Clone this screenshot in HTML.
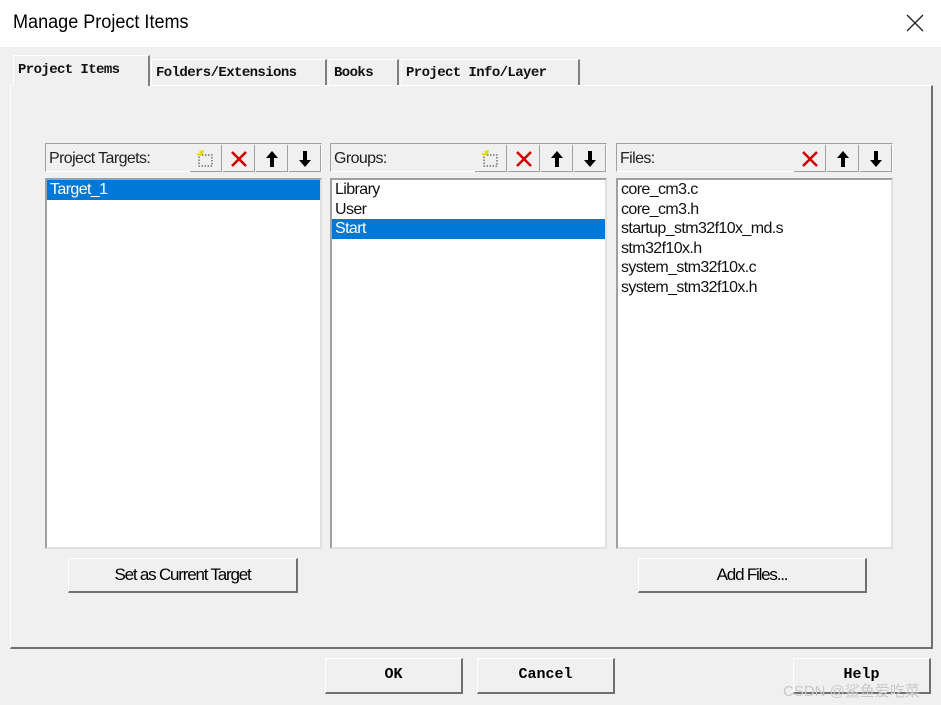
<!DOCTYPE html>
<html><head><meta charset="utf-8"><style>
body{margin:0;width:941px;height:705px;background:#f0f0f0;position:relative;overflow:hidden;font-family:"Liberation Sans",sans-serif;}
.a{position:absolute}
.title{left:0;top:0;width:941px;height:47px;background:#fff}
.title span{position:absolute;left:13px;top:12px;font-size:19px;color:#000;transform:scaleX(0.95);transform-origin:left}
.panel{left:10px;top:85px;width:920px;height:561px;border-top:1px solid #fff;border-left:1px solid #fff;border-right:2px solid #707070;border-bottom:2px solid #707070}
.tab{top:59px;height:26px;font-family:"Liberation Mono",monospace;font-weight:bold;font-size:14px;border-top:1px solid #fff;border-left:1px solid #fff;border-right:2px solid #808080;padding:0 4px;line-height:26px;box-sizing:border-box;white-space:nowrap;letter-spacing:-0.6px;color:#111}
.hdr{height:29px;border:1px solid #a0a0a0;border-right-color:#fff;border-bottom-color:#fff;box-sizing:border-box;font-size:16px;line-height:29px;padding-left:3px;color:#222;letter-spacing:-0.6px}
.ib{width:32px;height:27px;top:1px;border-right:1px solid #a0a0a0;border-bottom:1px solid #a0a0a0;box-sizing:border-box;background:#f0f0f0}
.ib svg{position:absolute;left:6px;top:4px}
.list{background:#fff;border:2px solid #a0a0a0;border-right-color:#e0e0e0;border-bottom-color:#e0e0e0;box-sizing:border-box;font-size:16px;letter-spacing:-0.6px;color:#111}
.list div{height:19.5px;line-height:19.5px;padding-left:3px}
.sel{background:#0078d7;color:#fff}
.btn{border-top:1px solid #fff;border-left:1px solid #fff;border-right:2px solid #707070;border-bottom:2px solid #707070;box-sizing:border-box;text-align:center;background:#f0f0f0}
.b1{font-size:17px;line-height:31px;letter-spacing:-1.2px}
.b2{font-family:"Liberation Mono",monospace;font-weight:bold;font-size:15px;line-height:32px}
</style></head><body>
<div class="a title"><span>Manage Project Items</span></div>
<svg class="a" style="left:906px;top:14px" width="18" height="18"><path d="M1 1L17 17M17 1L1 17" stroke="#222" stroke-width="1.3"/></svg>
<div class="a panel"></div>
<div class="a tab" style="left:13px;top:55px;height:31px;width:137px;background:#f0f0f0;z-index:2;line-height:28px">Project Items</div>
<div class="a tab" style="left:151px;width:176px">Folders/Extensions</div>
<div class="a tab" style="left:329px;width:70px">Books</div>
<div class="a tab" style="left:401px;width:179px">Project Info/Layer</div>

<div class="a hdr" style="left:45px;top:143px;width:277px">Project Targets:
 <div class="a ib" style="left:144px"><svg width="20" height="20"><rect x="3" y="6" width="13" height="11" fill="none" stroke="#333" stroke-dasharray="1.5 1.5"/><path d="M4 2l2 4M1 5l4 1M7 1l-1 4" stroke="#dd0" stroke-width="2"/></svg></div>
 <div class="a ib" style="left:177px"><svg width="20" height="20"><path d="M3 3L17 17M17 3L3 17" stroke="#c00" stroke-width="2.5"/></svg></div>
 <div class="a ib" style="left:210px"><svg width="20" height="20"><path d="M10 2L4 9h4v9h4V9h4z" fill="#000"/></svg></div>
 <div class="a ib" style="left:243px"><svg width="20" height="20"><path d="M10 18L4 11h4V2h4v9h4z" fill="#000"/></svg></div>
</div>
<div class="a list" style="left:45px;top:178px;width:277px;height:371px"><div class="sel">Target_1</div></div>

<div class="a hdr" style="left:330px;top:143px;width:277px">Groups:
 <div class="a ib" style="left:144px"><svg width="20" height="20"><rect x="3" y="6" width="13" height="11" fill="none" stroke="#333" stroke-dasharray="1.5 1.5"/><path d="M4 2l2 4M1 5l4 1M7 1l-1 4" stroke="#dd0" stroke-width="2"/></svg></div>
 <div class="a ib" style="left:177px"><svg width="20" height="20"><path d="M3 3L17 17M17 3L3 17" stroke="#c00" stroke-width="2.5"/></svg></div>
 <div class="a ib" style="left:210px"><svg width="20" height="20"><path d="M10 2L4 9h4v9h4V9h4z" fill="#000"/></svg></div>
 <div class="a ib" style="left:243px"><svg width="20" height="20"><path d="M10 18L4 11h4V2h4v9h4z" fill="#000"/></svg></div>
</div>
<div class="a list" style="left:330px;top:178px;width:277px;height:371px"><div>Library</div><div>User</div><div class="sel">Start</div></div>

<div class="a hdr" style="left:616px;top:143px;width:277px">Files:
 <div class="a ib" style="left:177px"><svg width="20" height="20"><path d="M3 3L17 17M17 3L3 17" stroke="#c00" stroke-width="2.5"/></svg></div>
 <div class="a ib" style="left:210px"><svg width="20" height="20"><path d="M10 2L4 9h4v9h4V9h4z" fill="#000"/></svg></div>
 <div class="a ib" style="left:243px"><svg width="20" height="20"><path d="M10 18L4 11h4V2h4v9h4z" fill="#000"/></svg></div>
</div>
<div class="a list" style="left:616px;top:178px;width:277px;height:371px"><div>core_cm3.c</div><div>core_cm3.h</div><div>startup_stm32f10x_md.s</div><div>stm32f10x.h</div><div>system_stm32f10x.c</div><div>system_stm32f10x.h</div></div>

<div class="a btn b1" style="left:68px;top:558px;width:230px;height:35px">Set as Current Target</div>
<div class="a btn b1" style="left:638px;top:558px;width:229px;height:35px">Add Files...</div>
<div class="a btn b2" style="left:325px;top:658px;width:138px;height:36px">OK</div>
<div class="a btn b2" style="left:477px;top:658px;width:138px;height:36px">Cancel</div>
<div class="a btn b2" style="left:793px;top:658px;width:138px;height:36px">Help</div>
<div class="a" style="left:783px;top:680px;font-size:15px;color:#c8c8c8;font-family:'Liberation Sans','Noto Sans CJK SC',sans-serif">CSDN @鲨鱼爱吃菜</div>
</body></html>
